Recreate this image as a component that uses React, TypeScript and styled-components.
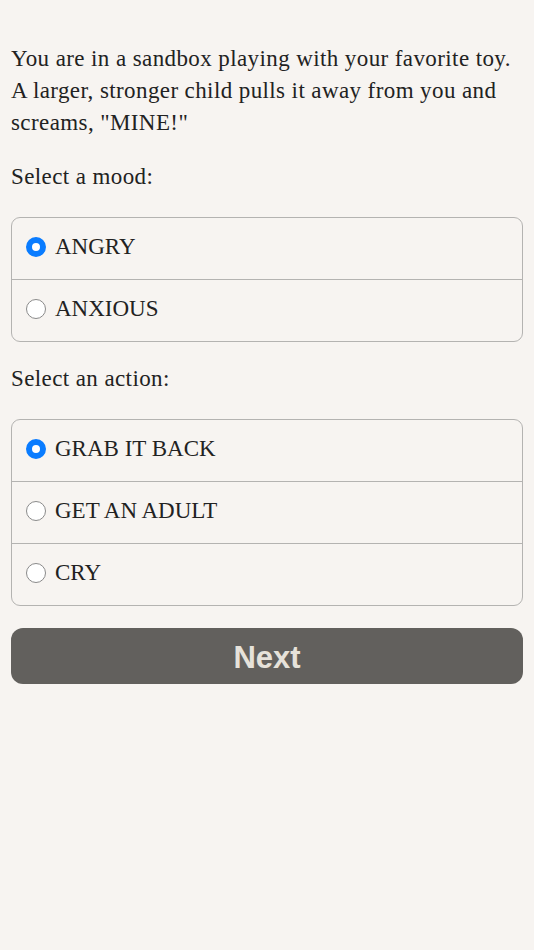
import styled, { createGlobalStyle } from 'styled-components';

const GlobalStyles = createGlobalStyle`
  * {
    box-sizing: border-box;
    margin: 0;
    padding: 0;
  }

  html, body {
    background: #f7f4f1;
  }

  body {
    font-family: 'Liberation Serif', 'Times New Roman', serif;
    font-size: 23px;
    letter-spacing: 0.4px;
    line-height: 32px;
    color: #222;
  }
`;

const Page = styled.main`
  display: flex;
  flex-direction: column;
  padding: 43px 11px 40px 11px;
  min-height: 100vh;
`;

const Story = styled.p`
  margin-bottom: 22px;
`;

const Prompt = styled.p`
  margin-bottom: 24px;
`;

const Group = styled.div`
  display: flex;
  flex-direction: column;
  border: 1px solid #b4b3b1;
  border-radius: 9px;
  margin-bottom: 21px;
  overflow: hidden;
`;

const Option = styled.label`
  display: flex;
  align-items: center;
  gap: 9px;
  height: 61px;
  padding: 0 14px 4px;
  letter-spacing: 0;
  cursor: pointer;

  & + & {
    height: 62px;
    border-top: 1px solid #b4b3b1;
  }
`;

const Radio = styled.span<{ $checked: boolean }>`
  flex: none;
  width: 20px;
  height: 20px;
  border-radius: 50%;
  background: #fff;
  border: ${(p) => (p.$checked ? '6px solid #0a7cff' : '1.5px solid #8a8a8a')};
`;

const NextButton = styled.button`
  height: 56px;
  margin-top: 1px;
  padding-top: 3px;
  border: none;
  border-radius: 12px;
  background: #62605d;
  color: #e6e2da;
  font-family: 'Liberation Sans', Arial, sans-serif;
  font-weight: 700;
  font-size: 31px;
  letter-spacing: 0;
  cursor: pointer;
`;

type Choice = { label: string; checked: boolean };

const moods: Choice[] = [
  { label: 'ANGRY', checked: true },
  { label: 'ANXIOUS', checked: false },
];

const actions: Choice[] = [
  { label: 'GRAB IT BACK', checked: true },
  { label: 'GET AN ADULT', checked: false },
  { label: 'CRY', checked: false },
];

const ChoiceGroup = ({ items }: { items: Choice[] }) => (
  <Group>
    {items.map((item) => (
      <Option key={item.label}>
        <Radio $checked={item.checked} />
        <span>{item.label}</span>
      </Option>
    ))}
  </Group>
);

const App = () => {
  return (
    <>
      <GlobalStyles />
      <Page>
        <Story>
          You are in a sandbox playing with your favorite toy. A larger, stronger child pulls it
          away from you and screams, "MINE!"
        </Story>
        <Prompt>Select a mood:</Prompt>
        <ChoiceGroup items={moods} />
        <Prompt>Select an action:</Prompt>
        <ChoiceGroup items={actions} />
        <NextButton>Next</NextButton>
      </Page>
    </>
  );
};

export default App;
